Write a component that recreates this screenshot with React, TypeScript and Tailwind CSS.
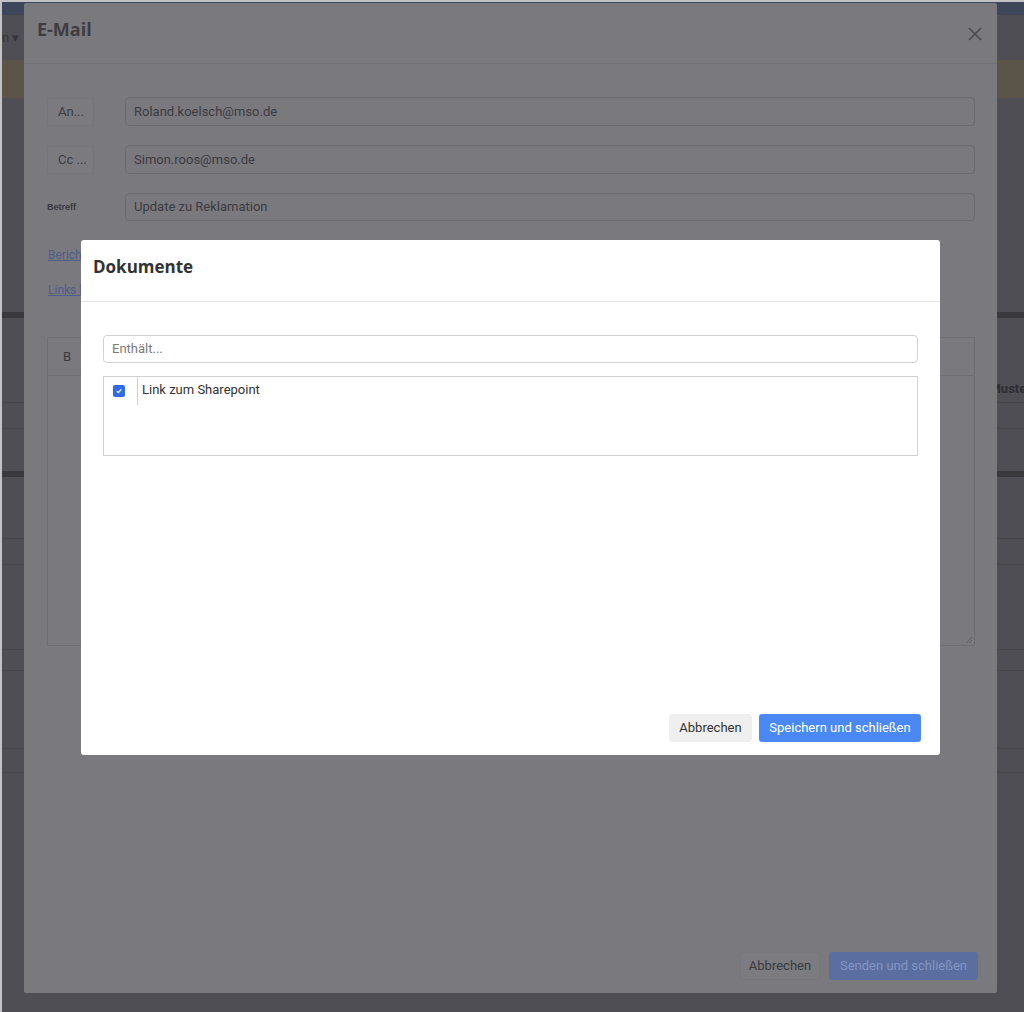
import React from "react";

function BgRow({ h, cls = "", children }: { h: string; cls?: string; children?: React.ReactNode }) {
  return <div className={`${h} w-full shrink-0 ${cls}`}>{children}</div>;
}

export default function App() {
  return (
    <div className="relative w-[1024px] h-[1012px] overflow-hidden bg-[#4f4e54] border-t-2 border-l-2 border-[#c2c2c5] font-['Roboto',sans-serif]">
      {/* page behind the dialogs */}
      <div className="flex flex-col w-full">
        <BgRow h="h-[13px]" cls="bg-[#3d4759]" />
        <BgRow h="h-[45px]" cls="flex items-center">
          <span className="-ml-[7px] text-[13px] text-[#35343a]">en ▾</span>
        </BgRow>
        <BgRow h="h-[38px]" cls="bg-[#5a5548]" />
        <BgRow h="h-[214px]" />
        <BgRow h="h-[6px]" cls="bg-[#3a393e]" />
        <BgRow h="h-[85px]" cls="border-b border-[#47464b] flex items-end justify-end pb-[4px]">
          <span className="-mr-[7px] text-[13px] font-bold text-[#2e2d32]">Muster</span>
        </BgRow>
        <BgRow h="h-[26px]" cls="border-b border-[#47464b]" />
        <BgRow h="h-[42px]" />
        <BgRow h="h-[6px]" cls="bg-[#3a393e]" />
        <BgRow h="h-[62px]" cls="border-b border-[#47464b]" />
        <BgRow h="h-[26px]" cls="border-b border-[#47464b]" />
        <BgRow h="h-[85px]" cls="border-b border-[#47464b]" />
        <BgRow h="h-[21px]" cls="border-b border-[#47464b]" />
        <BgRow h="h-[78px]" cls="border-b border-[#47464b]" />
        <BgRow h="h-[24px]" cls="border-b border-[#47464b]" />
      </div>

      {/* E-Mail dialog (dimmed) */}
      <div className="absolute left-[22px] top-[1px] w-[973px] h-[990px] bg-[#7a797e] rounded-[2px] flex flex-col">
        <div className="h-[61px] shrink-0 border-b border-[#727176] flex items-center justify-between pl-[13px] pr-[14px]">
          <span className="text-[18px] font-bold text-[#3e3d42] -mt-[7px] font-['Open_Sans',sans-serif]">E-Mail</span>
          <svg width="16" height="16" viewBox="0 0 16 16" className="mt-[2px]">
            <path d="M2 2 L14 14 M14 2 L2 14" stroke="#4a494e" strokeWidth="1.6" />
          </svg>
        </div>
        <div className="flex-1 flex flex-col pt-[33px] pl-[23px] pr-[22px]">
          <div className="flex items-center h-[29px]">
            <div className="w-[78px] shrink-0">
              <div className="w-[47px] h-[28px] rounded-[3px] border border-[#76757a] bg-[#7b7a7f] flex items-center pl-[10px] text-[13px] text-[#3b3a3f]">An...</div>
            </div>
            <div className="flex-1 h-[29px] rounded-[4px] border border-[#6c6b70] flex items-center pl-[8px] text-[13px] text-[#3c3b40]">Roland.koelsch@mso.de</div>
          </div>
          <div className="flex items-center h-[29px] mt-[19px]">
            <div className="w-[78px] shrink-0">
              <div className="w-[47px] h-[28px] rounded-[3px] border border-[#76757a] bg-[#7b7a7f] flex items-center pl-[10px] text-[13px] text-[#3b3a3f]">Cc ...</div>
            </div>
            <div className="flex-1 h-[29px] rounded-[4px] border border-[#6c6b70] flex items-center pl-[8px] text-[13px] text-[#3c3b40]">Simon.roos@mso.de</div>
          </div>
          <div className="flex items-center h-[28px] mt-[19px]">
            <div className="w-[78px] shrink-0 text-[9px] font-bold text-[#3a393e] font-['Liberation_Sans',sans-serif] pt-[2px]">Betreff</div>
            <div className="flex-1 h-[28px] rounded-[4px] border border-[#6c6b70] flex items-center pl-[8px] text-[13px] text-[#3c3b40]">Update zu Reklamation</div>
          </div>
          <div className="mt-[26px] text-[12px] leading-[16px] text-[#4e5d8a] underline pl-[1px]">Bericht hinzufügen</div>
          <div className="mt-[19px] text-[12px] leading-[16px] text-[#4e5d8a] underline pl-[1px]">Links hinzufügen</div>
          <div className="mt-[39px] h-[309px] border border-[#6f6e73] flex flex-col relative">
            <div className="h-[38px] border-b border-[#6f6e73] flex items-center pl-[15px] text-[13px] text-[#3b3a3f]">B</div>
            <div className="flex-1" />
            <svg width="8" height="8" viewBox="0 0 8 8" className="absolute right-[1px] bottom-[1px]">
              <path d="M1 7 L7 1 M4 7 L7 4" stroke="#5a595e" strokeWidth="0.8" />
            </svg>
          </div>
        </div>
        <div className="flex justify-end items-center gap-[9px] pr-[19px] pb-[13px]">
          <div className="w-[80px] h-[28px] rounded-[3px] bg-[#7c7b80] border border-[#77767b] flex items-center justify-center text-[13px] text-[#3b3a3f]">Abbrechen</div>
          <div className="w-[149px] h-[28px] rounded-[3px] bg-[#5a6ea0] flex items-center justify-center text-[13px] text-[#8395c2]">Senden und schließen</div>
        </div>
      </div>

      {/* Dokumente modal */}
      <div className="absolute left-[79px] top-[238px] w-[859px] h-[515px] bg-white rounded-[3px] flex flex-col">
        <div className="h-[62px] shrink-0 border-b border-[#e6e6e6] flex items-center pl-[12px]">
          <span className="text-[17px] font-bold text-[#333333] -mt-[8px] font-['Open_Sans',sans-serif]">Dokumente</span>
        </div>
        <div className="flex-1 flex flex-col pt-[33px] px-[22px]">
          <div className="h-[28px] rounded-[4px] border border-[#d2d2d2] flex items-center pl-[8px] text-[13px] text-[#7a7a7a]">Enthält...</div>
          <div className="mt-[13px] h-[80px] border border-[#d2d2d2]">
            <div className="flex h-[28px]">
              <div className="w-[33px] shrink-0 pl-[9px] pt-[8px]">
                <div className="w-[12px] h-[12px] rounded-[2px] bg-[#2f6ce5] flex items-center justify-center">
                  <svg width="8" height="8" viewBox="0 0 8 8">
                    <path d="M1.8 4.2 L3.4 5.6 L6.2 2.4" stroke="white" strokeWidth="1.3" fill="none" />
                  </svg>
                </div>
              </div>
              <div className="border-l border-[#cfcfcf] pl-[4px] pt-[5px] text-[13px] text-[#333333] leading-[16px]">Link zum Sharepoint</div>
            </div>
          </div>
        </div>
        <div className="flex justify-end items-center gap-[7px] pr-[19px] pb-[13px]">
          <div className="w-[83px] h-[28px] rounded-[3px] bg-[#efefef] flex items-center justify-center text-[13px] text-[#333333]">Abbrechen</div>
          <div className="w-[162px] h-[28px] rounded-[3px] bg-[#4a89f3] flex items-center justify-center text-[13px] text-white">Speichern und schließen</div>
        </div>
      </div>
    </div>
  );
}
